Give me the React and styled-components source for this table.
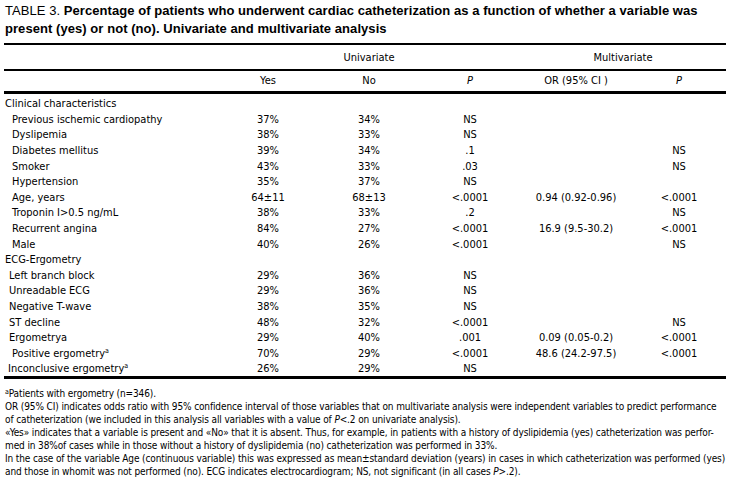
import React from "react";
import styled, { createGlobalStyle } from "styled-components";

const Global = createGlobalStyle`
  html, body { margin: 0; padding: 0; background: #fff; }
  body { color: #000; }
`;

const Page = styled.div`
  width: 730px;
  padding: 2px 4px 0 5px;
  box-sizing: border-box;
`;

const Title = styled.div`
  font-family: "Liberation Sans", Arial, sans-serif;
  font-size: 13px;
  line-height: 18px;
  letter-spacing: 0.06px;
  white-space: nowrap;
  padding-bottom: 5px;
  strong { font-weight: bold; }
`;

const Table = styled.table`
  width: 722px;
  margin-left: -1px;
  border-collapse: collapse;
  font-family: "DejaVu Sans Condensed", "Liberation Sans", sans-serif;
  font-size: 11px;
  border-top: 2px solid #000;
  border-bottom: 3px solid #000;
`;

const GroupRow = styled.tr`
  height: 26px;
  border-bottom: 2px solid #000;
`;

const HeadRow = styled.tr`
  height: 22px;
  border-bottom: 3px solid #000;
`;

const Th = styled.th`
  font-weight: normal;
  text-align: center;
  padding: 0;
  font-style: ${(p) => (p.$italic ? "italic" : "normal")};
`;

const Row = styled.tr`
  height: 15.6px;
`;

const Label = styled.td`
  padding: 0 0 0 ${(p) => p.$indent}px;
  white-space: nowrap;
  line-height: 15px;
`;

const Cell = styled.td`
  text-align: center;
  padding: 0;
  white-space: nowrap;
  line-height: 15px;
`;

const Spacer = styled.tr`
  height: ${(p) => p.$h}px;
`;

const Notes = styled.div`
  font-family: "DejaVu Sans Condensed", "Liberation Sans", sans-serif;
  font-size: 10px;
  letter-spacing: -0.12px;
  line-height: 13px;
  padding-top: 8px;
  white-space: nowrap;
  i { font-style: italic; }
`;

const Line = styled.div``;

const Sup = styled.sup`
  font-size: 7px;
  vertical-align: top;
  line-height: 10px;
`;

const rows = [
  { label: "Clinical characteristics", indent: 1 },
  { label: "Previous ischemic cardiopathy", indent: 8, v: ["37%", "34%", "NS", "", ""] },
  { label: "Dyslipemia", indent: 8, v: ["38%", "33%", "NS", "", ""] },
  { label: "Diabetes mellitus", indent: 8, v: ["39%", "34%", ".1", "", "NS"] },
  { label: "Smoker", indent: 8, v: ["43%", "33%", ".03", "", "NS"] },
  { label: "Hypertension", indent: 8, v: ["35%", "37%", "NS", "", ""] },
  { label: "Age, years", indent: 8, v: ["64±11", "68±13", "<.0001", "0.94 (0.92-0.96)", "<.0001"] },
  { label: "Troponin I>0.5 ng/mL", indent: 8, v: ["38%", "33%", ".2", "", "NS"] },
  { label: "Recurrent angina", indent: 8, v: ["84%", "27%", "<.0001", "16.9 (9.5-30.2)", "<.0001"] },
  { label: "Male", indent: 8, v: ["40%", "26%", "<.0001", "", "NS"] },
  { label: "ECG-Ergometry", indent: 1 },
  { label: "Left branch block", indent: 5, v: ["29%", "36%", "NS", "", ""] },
  { label: "Unreadable ECG", indent: 5, v: ["29%", "36%", "NS", "", ""] },
  { label: "Negative T-wave", indent: 5, v: ["38%", "35%", "NS", "", ""] },
  { label: "ST decline", indent: 5, v: ["48%", "32%", "<.0001", "", "NS"] },
  { label: "Ergometrya", indent: 5, v: ["29%", "40%", ".001", "0.09 (0.05-0.2)", "<.0001"] },
  { label: "Positive ergometry", sup: true, indent: 8, v: ["70%", "29%", "<.0001", "48.6 (24.2-97.5)", "<.0001"] },
  { label: "Inconclusive ergometry", sup: true, indent: 4, v: ["26%", "29%", "NS", "", ""] },
];

export default function App() {
  return (
    <>
      <Global />
      <Page>
        <Title>
          TABLE 3. <strong>Percentage of patients who underwent cardiac catheterization as a function of whether a variable was</strong>
          <br />
          <strong>present (yes) or not (no). Univariate and multivariate analysis</strong>
        </Title>
        <Table>
          <colgroup>
            <col style={{ width: "214px" }} />
            <col style={{ width: "100px" }} />
            <col style={{ width: "102px" }} />
            <col style={{ width: "100px" }} />
            <col style={{ width: "112px" }} />
            <col style={{ width: "94px" }} />
          </colgroup>
          <thead>
            <GroupRow>
              <Th />
              <Th colSpan={3}>Univariate</Th>
              <Th colSpan={2}>Multivariate</Th>
            </GroupRow>
            <HeadRow>
              <Th />
              <Th>Yes</Th>
              <Th>No</Th>
              <Th $italic>P</Th>
              <Th>OR (95% CI )</Th>
              <Th $italic>P</Th>
            </HeadRow>
          </thead>
          <tbody>
            <Spacer $h={4} />
            {rows.map((r, i) => (
              <Row key={i}>
                <Label $indent={r.indent}>
                  {r.label}
                  {r.sup && <Sup>a</Sup>}
                </Label>
                {(r.v || ["", "", "", "", ""]).map((c, j) => (
                  <Cell key={j}>{c}</Cell>
                ))}
              </Row>
            ))}
          </tbody>
        </Table>
        <Notes>
          <Line><Sup>a</Sup>Patients with ergometry (n=346).</Line>
          <Line>OR (95% CI) indicates odds ratio with 95% confidence interval of those variables that on multivariate analysis were independent variables to predict performance</Line>
          <Line>of catheterization (we included in this analysis all variables with a value of <i>P</i>&lt;.2 on univariate analysis).</Line>
          <Line>«Yes» indicates that a variable is present and «No» that it is absent. Thus, for example, in patients with a history of dyslipidemia (yes) catheterization was perfor-</Line>
          <Line>med in 38%of cases while in those without a history of dyslipidemia (no) catheterization was performed in 33%.</Line>
          <Line>In the case of the variable Age (continuous variable) this was expressed as mean±standard deviation (years) in cases in which catheterization was performed (yes)</Line>
          <Line>and those in whomit was not performed (no). ECG indicates electrocardiogram; NS, not significant (in all cases <i>P</i>&gt;.2).</Line>
        </Notes>
      </Page>
    </>
  );
}
